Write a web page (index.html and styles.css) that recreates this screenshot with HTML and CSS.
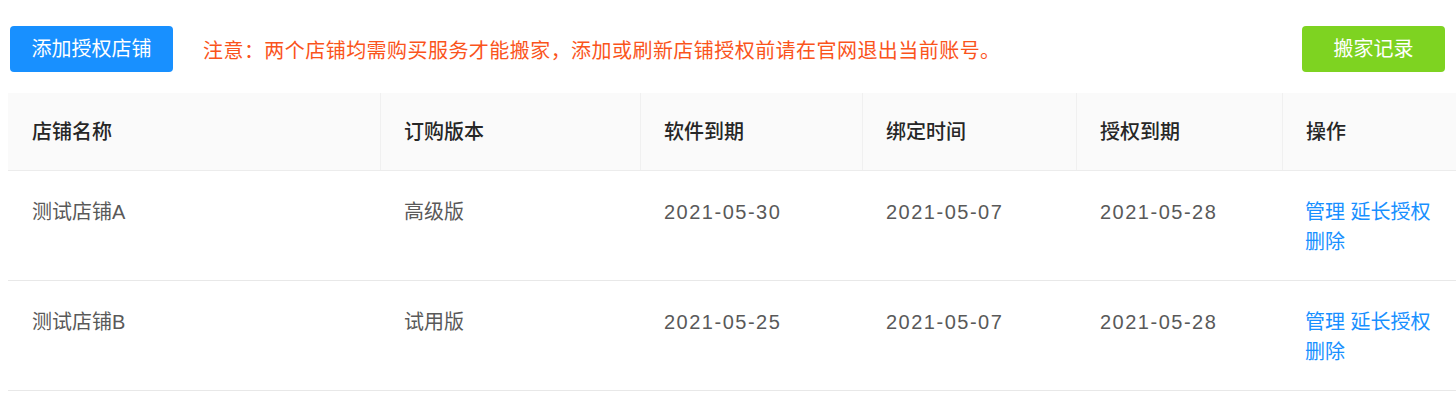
FILE: index.html
```html
<!DOCTYPE html>
<html lang="zh-CN">
<head>
<meta charset="utf-8">
<title>店铺授权</title>
<link rel="stylesheet" href="styles.css">
</head>
<body>
<div class="page">
  <div class="toolbar">
    <button class="btn btn-primary">添加授权店铺</button>
    <span class="notice">注意：两个店铺均需购买服务才能搬家，添加或刷新店铺授权前请在官网退出当前账号。</span>
    <button class="btn btn-success">搬家记录</button>
  </div>
  <table class="shops">
    <colgroup>
      <col class="c1"><col class="c2"><col class="c3"><col class="c4"><col class="c5"><col class="c6">
    </colgroup>
    <thead>
      <tr>
        <th>店铺名称</th><th>订购版本</th><th>软件到期</th><th>绑定时间</th><th>授权到期</th><th>操作</th>
      </tr>
    </thead>
    <tbody>
      <tr>
        <td>测试店铺A</td><td>高级版</td><td class="date">2021-05-30</td><td class="date">2021-05-07</td><td class="date">2021-05-28</td>
        <td class="ops"><a class="op">管理</a> <a class="op">延长授权</a> <a class="op">删除</a></td>
      </tr>
      <tr>
        <td>测试店铺B</td><td>试用版</td><td class="date">2021-05-25</td><td class="date">2021-05-07</td><td class="date">2021-05-28</td>
        <td class="ops"><a class="op">管理</a> <a class="op">延长授权</a> <a class="op">删除</a></td>
      </tr>
    </tbody>
  </table>
</div>
</body>
</html>
```

FILE: styles.css
```css
* { box-sizing: border-box; }
html, body { margin: 0; padding: 0; background: #fff; }
body {
  font-family: "Liberation Sans", "Noto Sans CJK SC", sans-serif;
  font-size: 20px;
  color: #595959;
  overflow: hidden;
}
.page {
  padding: 26px 0 0 8px;
  width: 1456px;
}
.toolbar {
  display: flex;
  align-items: center;
  height: 46px;
  padding: 0 11px 0 2px;
  margin-bottom: 21px;
}
.btn {
  font-family: inherit;
  font-size: 20px;
  height: 46px;
  border: none;
  border-radius: 4px;
  color: #fff;
  padding: 0;
  cursor: pointer;
  line-height: 46px;
}
.btn-primary {
  background: #1890ff;
  width: 163px;
}
.btn-success {
  background: #7ed321;
  width: 143px;
  margin-left: auto;
}
.notice {
  color: #fa541c;
  font-size: 20px;
  margin-left: 30px;
  letter-spacing: 0.45px;
}
.shops {
  width: 1448px;
  border-collapse: separate;
  border-spacing: 0;
  table-layout: fixed;
}
.c1 { width: 372px; }
.c2 { width: 260px; }
.c3 { width: 222px; }
.c4 { width: 214px; }
.c5 { width: 206px; }
.c6 { width: 174px; }
.shops th {
  background: #fafafa;
  color: #262626;
  font-weight: 500;
  text-align: left;
  height: 78px;
  padding: 0 24px;
  line-height: 30px;
  border-bottom: 1px solid #ececec;
  position: relative;
}
.shops th + th::before {
  content: "";
  position: absolute;
  left: 0;
  top: 0;
  bottom: 0;
  width: 1px;
  background: #f0f0f0;
}
.shops td {
  vertical-align: top;
  padding: 26px 23px 23px 24px;
  line-height: 30px;
  border-bottom: 1px solid #e8e8e8;
  height: 110px;
}
.shops td.date { letter-spacing: 1.5px; }
.shops td.ops { padding-right: 0; padding-left: 23px; }
.op {
  color: #1890ff;
  white-space: nowrap;
  cursor: pointer;
}
```
